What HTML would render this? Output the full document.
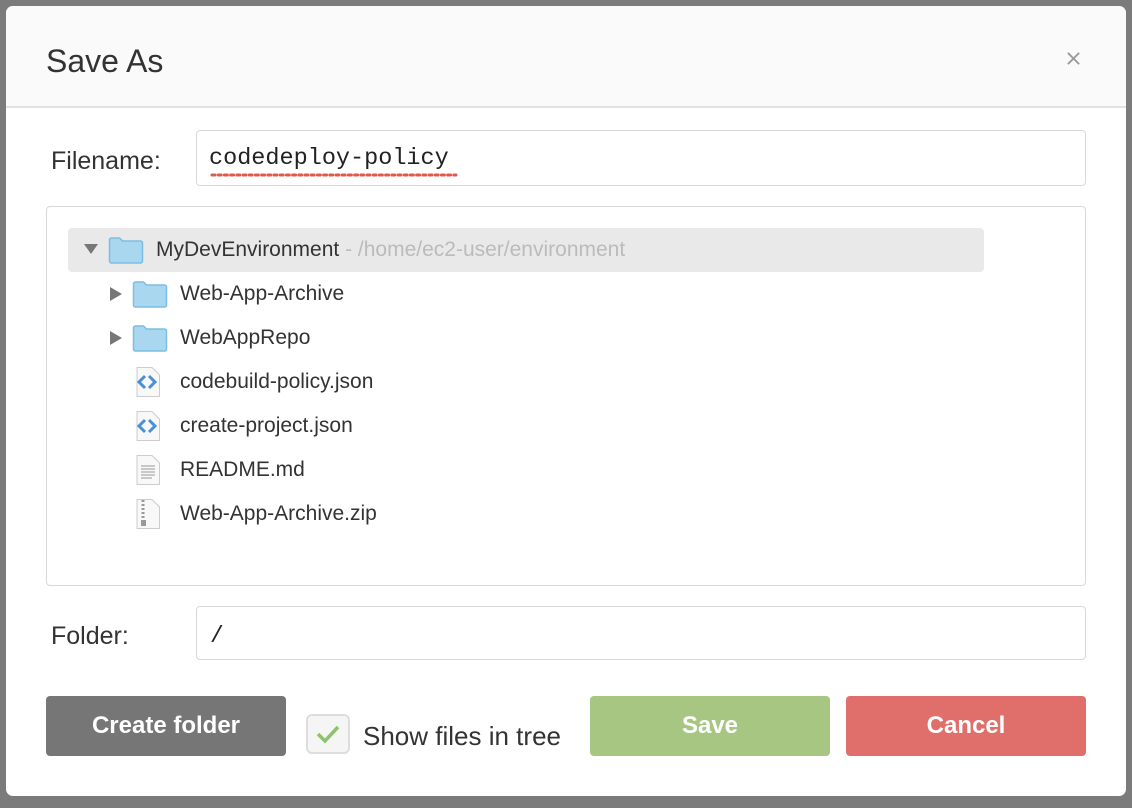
<!DOCTYPE html>
<html><head><meta charset="utf-8"><style>
*{box-sizing:border-box;margin:0;padding:0}
body{width:1132px;height:808px;background:#7b7b7b;font-family:"Liberation Sans",sans-serif;position:relative;overflow:hidden;color:#333}
.dlg{position:absolute;left:6px;top:6px;width:1120px;height:790px;background:#fff;border-radius:7px;overflow:hidden}
.hdr{position:absolute;left:0;top:0;width:100%;height:102px;background:#fafafa;border-bottom:2px solid #e2e2e2}
.a{position:absolute}
.inp{position:absolute;border:1px solid #d8d8d8;border-radius:4px;background:#fff}
.btn{position:absolute;height:60px;width:240px;border-radius:4px;color:#fff;font-weight:bold;font-size:24px;text-align:center;line-height:60px}
.row{position:absolute;font-size:21px;line-height:24px;color:#333}
</style></head><body>
<div class="dlg">
<div class="hdr"></div>
<div class="a" style="left:40px;top:37px;font-size:32px;color:#333">Save As</div>
<svg class="a" style="left:1060px;top:45px" width="15" height="15" viewBox="0 0 16 16"><path d="M2 2L14 14M14 2L2 14" stroke="#999" stroke-width="2"/></svg>
<div class="a" style="left:45px;top:141px;font-size:25px">Filename:</div>
<div class="inp" style="left:190px;top:124px;width:890px;height:56px"></div>
<div class="a" style="left:203px;top:139px;font-family:'Liberation Mono',monospace;font-size:23.5px;color:#222">codedeploy-policy</div>
<svg class="a" style="left:204px;top:166px" width="248" height="6"><line x1="2" y1="3" x2="246" y2="3" stroke="#e0594d" stroke-width="3" stroke-dasharray="3 3.2" stroke-linecap="round"/></svg>
<div class="inp" style="left:40px;top:200px;width:1040px;height:380px"></div>
<div class="a" style="left:62px;top:222px;width:916px;height:44px;background:#e9e9e9;border-radius:4px"></div>
<svg class="a" style="left:78px;top:237px" width="14" height="12"><path d="M0 1H14L7 11Z" fill="#777"/></svg>
<svg class="a" style="left:102px;top:230px" width="36" height="28" viewBox="0 0 36 28"><path d="M1.5 4a2 2 0 0 1 2-2h8l3 3h18a2 2 0 0 1 2 2v18a2 2 0 0 1-2 2h-29a2 2 0 0 1-2-2z" fill="#a9d7f0" stroke="#7cbde3" stroke-width="1.5"/></svg>
<div class="row" style="left:150px;top:232px">MyDevEnvironment <span style="color:#bbb">- /home/ec2-user/environment</span></div>
<svg class="a" style="left:104px;top:281px" width="12" height="14"><path d="M0 0V14L12 7Z" fill="#777"/></svg>
<svg class="a" style="left:126px;top:274px" width="36" height="28" viewBox="0 0 36 28"><path d="M1.5 4a2 2 0 0 1 2-2h8l3 3h18a2 2 0 0 1 2 2v18a2 2 0 0 1-2 2h-29a2 2 0 0 1-2-2z" fill="#a9d7f0" stroke="#7cbde3" stroke-width="1.5"/></svg>
<div class="row" style="left:174px;top:276px">Web-App-Archive</div>
<svg class="a" style="left:104px;top:325px" width="12" height="14"><path d="M0 0V14L12 7Z" fill="#777"/></svg>
<svg class="a" style="left:126px;top:318px" width="36" height="28" viewBox="0 0 36 28"><path d="M1.5 4a2 2 0 0 1 2-2h8l3 3h18a2 2 0 0 1 2 2v18a2 2 0 0 1-2 2h-29a2 2 0 0 1-2-2z" fill="#a9d7f0" stroke="#7cbde3" stroke-width="1.5"/></svg>
<div class="row" style="left:174px;top:320px">WebAppRepo</div>
<svg class="a" style="left:126px;top:360px" width="32" height="32"><path d="M5 1.5H20L27.5 9V30.5H5Z" fill="#f8f8f8" stroke="#ccc"/><path d="M13 10L7 16L13 22" stroke="#4a90d9" stroke-width="3" fill="none"/><path d="M17 10L23 16L17 22" stroke="#4a90d9" stroke-width="3" fill="none"/></svg>
<div class="row" style="left:174px;top:364px">codebuild-policy.json</div>
<svg class="a" style="left:126px;top:404px" width="32" height="32"><path d="M5 1.5H20L27.5 9V30.5H5Z" fill="#f8f8f8" stroke="#ccc"/><path d="M13 10L7 16L13 22" stroke="#4a90d9" stroke-width="3" fill="none"/><path d="M17 10L23 16L17 22" stroke="#4a90d9" stroke-width="3" fill="none"/></svg>
<div class="row" style="left:174px;top:408px">create-project.json</div>
<svg class="a" style="left:126px;top:448px" width="32" height="32"><path d="M5 1.5H20L27.5 9V30.5H5Z" fill="#f8f8f8" stroke="#ccc"/><path d="M9 12H23M9 15H23M9 18H23M9 21H23M9 24H20" stroke="#aaa" stroke-width="1.2"/></svg>
<div class="row" style="left:174px;top:452px">README.md</div>
<svg class="a" style="left:126px;top:492px" width="32" height="32"><path d="M5 1.5H20L27.5 9V30.5H5Z" fill="#f8f8f8" stroke="#ccc"/><path d="M11 2V22" stroke="#999" stroke-width="3" stroke-dasharray="2 2"/><rect x="9" y="22" width="5" height="6" fill="#999"/></svg>
<div class="row" style="left:174px;top:496px">Web-App-Archive.zip</div>
<div class="a" style="left:45px;top:616px;font-size:25px">Folder:</div>
<div class="inp" style="left:190px;top:600px;width:890px;height:54px"></div>
<div class="a" style="left:204px;top:617px;font-family:'Liberation Mono',monospace;font-size:23px;color:#222">/</div>
<div class="btn" style="left:40px;top:690px;background:#767676">Create folder</div>
<div class="a" style="left:300px;top:708px;width:44px;height:40px;border:2px solid #ddd;border-radius:6px;background:#f5f5f5"></div>
<svg class="a" style="left:309px;top:716px" width="26" height="24"><path d="M3 12L10 19L23 5" stroke="#8dc26f" stroke-width="3.5" fill="none"/></svg>
<div class="a" style="left:357px;top:715px;font-size:26px;color:#333">Show files in tree</div>
<div class="btn" style="left:584px;top:690px;background:#a6c682">Save</div>
<div class="btn" style="left:840px;top:690px;background:#e06f6b">Cancel</div>
</div>
</body></html>
